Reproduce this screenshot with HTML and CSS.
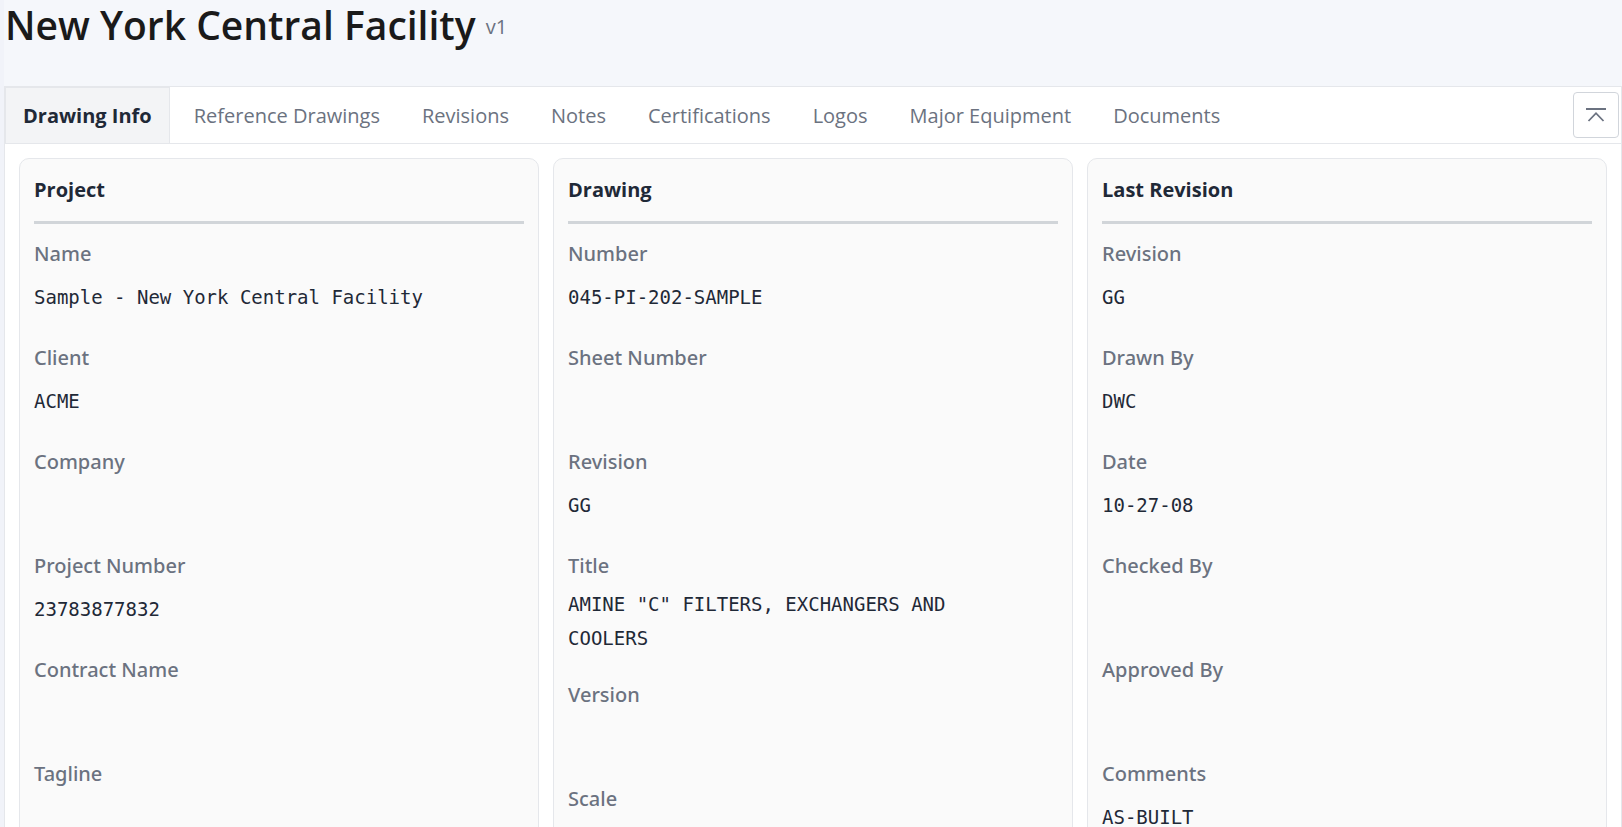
FILE: index.html
```html
<!DOCTYPE html>
<html lang="en">
<head>
    <meta charset="UTF-8">
    <meta name="viewport" content="width=device-width, initial-scale=1.0">
    <title>New York Central Facility</title>
    <link rel="stylesheet" href="styles.css">
</head>
<body>
    <main class="page">
        <header class="page-header">
            <h1>New York Central Facility</h1>
            <span class="version">v1</span>
        </header>

        <div class="panel">
            <!-- Tabs -->
            <div class="tab-bar">
                <nav class="tabs">
                    <button class="tab active">Drawing Info</button>
                    <button class="tab">Reference Drawings</button>
                    <button class="tab">Revisions</button>
                    <button class="tab">Notes</button>
                    <button class="tab">Certifications</button>
                    <button class="tab">Logos</button>
                    <button class="tab">Major Equipment</button>
                    <button class="tab">Documents</button>
                </nav>
                <button class="collapse" aria-label="Collapse">
                    <svg width="20" height="14" viewBox="0 0 20 14" fill="none" stroke="currentColor">
                        <path d="M0 1H20" stroke-width="2"/>
                        <path d="M2.5 13L10 5.2L17.5 13" stroke-width="1.8"/>
                    </svg>
                </button>
            </div>

            <!-- Drawing Info -->
            <div class="cards">
                <section class="card">
                    <h2>Project</h2>
                    <dl>
                        <dt>Name</dt>
                        <dd>Sample - New York Central Facility</dd>
                        <dt>Client</dt>
                        <dd>ACME</dd>
                        <dt>Company</dt>
                        <dd></dd>
                        <dt>Project Number</dt>
                        <dd>23783877832</dd>
                        <dt>Contract Name</dt>
                        <dd></dd>
                        <dt>Tagline</dt>
                        <dd></dd>
                    </dl>
                </section>

                <section class="card">
                    <h2>Drawing</h2>
                    <dl>
                        <dt>Number</dt>
                        <dd>045-PI-202-SAMPLE</dd>
                        <dt>Sheet Number</dt>
                        <dd></dd>
                        <dt>Revision</dt>
                        <dd>GG</dd>
                        <dt>Title</dt>
                        <dd>AMINE "C" FILTERS, EXCHANGERS AND COOLERS</dd>
                        <dt>Version</dt>
                        <dd></dd>
                        <dt>Scale</dt>
                        <dd></dd>
                    </dl>
                </section>

                <section class="card">
                    <h2>Last Revision</h2>
                    <dl>
                        <dt>Revision</dt>
                        <dd>GG</dd>
                        <dt>Drawn By</dt>
                        <dd>DWC</dd>
                        <dt>Date</dt>
                        <dd>10-27-08</dd>
                        <dt>Checked By</dt>
                        <dd></dd>
                        <dt>Approved By</dt>
                        <dd></dd>
                        <dt>Comments</dt>
                        <dd>AS-BUILT</dd>
                    </dl>
                </section>
            </div>
        </div>
    </main>
    <script>
        const tabs = document.querySelectorAll(".tab");
        tabs.forEach(tab => {
            tab.addEventListener("click", () => {
                document.querySelector(".tab.active").classList.remove("active");
                tab.classList.add("active");
            });
        });
        document.querySelector(".collapse").addEventListener("click", () => {
            document.querySelector(".cards").classList.toggle("hidden");
        });
    </script>
</body>
</html>
```
FILE: styles.css
```css
* {
    box-sizing: border-box;
}
html {
    height: 100%;
    overflow: hidden;
}
body {
    margin: 0;
    height: 100%;
    overflow: hidden;
    padding-left: 4px;
    background-color: #f1f3f9;
    font-family: "Segoe UI", "Open Sans", "Noto Sans", sans-serif;
    font-size: 20px;
    line-height: 34px;
    color: #1f2937;
}
.page {
    background-color: #f5f7fb;
}
.page-header {
    display: flex;
    align-items: flex-start;
    gap: 10px;
    height: 86px;
    padding-left: 1px;
}
h1 {
    margin: 0;
    font-size: 39px;
    line-height: 50px;
    font-weight: 600;
    color: #1a1a1a;
}
.version {
    line-height: 54px;
    color: #6b7280;
}
.panel {
    background-color: white;
    border: 1px solid #e5e7eb;
}
.tab-bar {
    display: flex;
    justify-content: space-between;
    align-items: center;
    padding-right: 2px;
    border-bottom: 1px solid #e5e7eb;
}
.tabs {
    display: flex;
    gap: 6px;
}
button {
    font: inherit;
    cursor: pointer;
}
.tab {
    height: 56px;
    padding: 0 17px;
    background: none;
    border: 1px solid transparent;
    border-bottom: none;
    color: #6b7280;
}
.tab.active {
    background-color: #f3f4f6;
    border-color: #e5e7eb;
    color: #1f2937;
    font-weight: 700;
}
.collapse {
    display: flex;
    align-items: center;
    justify-content: center;
    width: 46px;
    height: 46px;
    padding: 0;
    background-color: white;
    border: 1px solid #d1d5db;
    border-radius: 4px;
    color: #6b7280;
}
.cards {
    display: grid;
    grid-template-columns: repeat(3, 1fr);
    gap: 14px;
    padding: 14px;
}
.cards.hidden {
    display: none;
}
.card {
    padding: 14px;
    background-color: #fafafa;
    border: 1px solid #e5e7eb;
    border-radius: 10px;
}
h2 {
    margin: 0 0 13px;
    padding-bottom: 14px;
    border-bottom: 3px solid #d1d5d9;
    font-size: 20px;
    font-weight: 700;
}
dl {
    margin: 0;
}
dt {
    margin-bottom: 4px;
    font-family: "Noto Sans", sans-serif;
    font-weight: 500;
    color: #6b7280;
}
dd {
    display: flex;
    align-items: center;
    min-height: 43px;
    margin: 0 0 23px;
    padding-right: 34px;
    font-family: "DejaVu Sans Mono", monospace;
    font-size: 19px;
}
```
